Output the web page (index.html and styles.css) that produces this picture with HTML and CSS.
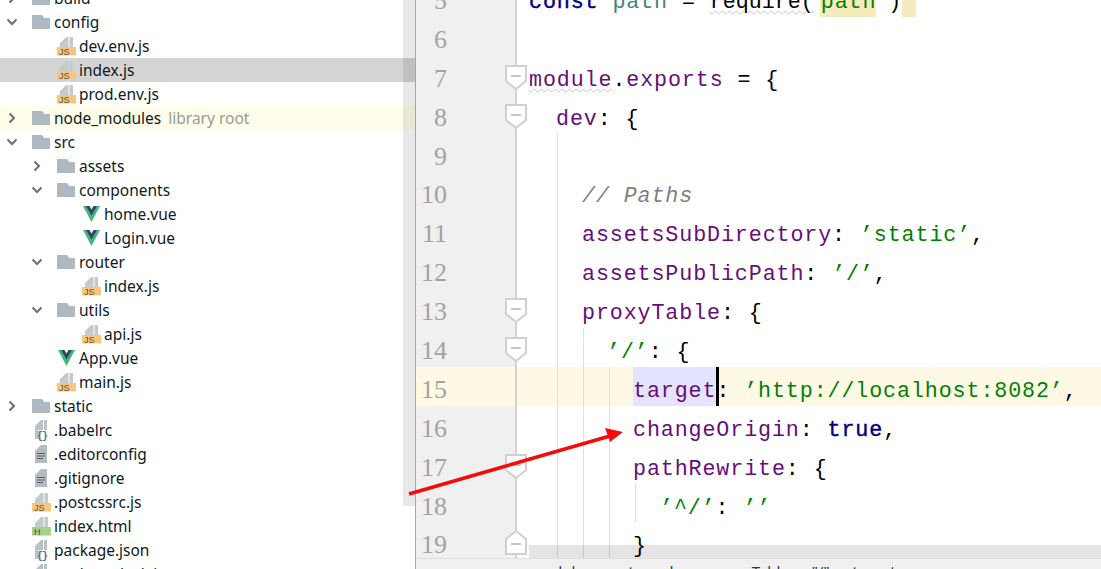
FILE: index.html
```html
<!DOCTYPE html>
<html lang="en">
<head>
<meta charset="utf-8">
<title>config/index.js</title>
<link rel="stylesheet" href="styles.css">
</head>
<body>
<svg class="defs" aria-hidden="true">
  <symbol id="folder" viewBox="0 0 19 24"><path d="M0 5h10l2.500 3H18v11H0z" fill="#afb9c1"/></symbol>
  <symbol id="js" viewBox="0 0 19 24"><path d="M3 13V9l6-6h2.500v10zM12.500 3H16v10h-3.500z" fill="#c4cace"/><rect y="13" width="19" height="8.500" fill="#f5c77e"/><text x="2" y="20.700" class="tag">JS</text></symbol>
  <symbol id="html" viewBox="0 0 19 24"><path d="M3 13V9l6-6h2.500v10zM12.500 3H16v10h-3.500z" fill="#c4cace"/><rect y="13" width="19" height="8.500" fill="#a6d189"/><text x="2" y="20.700" class="tag">H</text></symbol>
  <symbol id="json" viewBox="0 0 19 24"><path d="M3 13V8l6-6h2v10zM12 2h3v10h-3zM3 13h5v8H3z" fill="#b9c1c6"/><text x="5" y="20.500" class="brace">{}</text></symbol>
  <symbol id="text" viewBox="0 0 19 24"><path d="M3 9l6-6h6v18H3z" fill="#b4bcc2"/><path d="M5 11.500h8M5 14h8M5 16.500h6" stroke="#56606a" stroke-width="1.200"/></symbol>
  <symbol id="vue" viewBox="0 0 19 24"><path d="M1 4h4.500l4 7 4-7H18L9.500 20z" fill="#41b883"/><path d="M4 4h3.500l2 3.500 2-3.500H15l-5.500 9.500z" fill="#35495e"/></symbol>
  <symbol id="open" viewBox="0 0 12 24"><path d="M1.500 9.500l4.500 4.500 4.500-4.500" fill="none" stroke="#6e6e6e" stroke-width="2"/></symbol>
  <symbol id="closed" viewBox="0 0 12 24"><path d="M3.500 7.500l4.500 4.500-4.500 4.500" fill="none" stroke="#6e6e6e" stroke-width="2"/></symbol>
  <symbol id="fold-down" viewBox="0 0 22 26"><path d="M1 1h20v15l-10 8-10-8z" fill="#fff" stroke="#d0d0d0" stroke-width="2"/><path d="M6 11h10" stroke="#c8c8c8" stroke-width="2"/></symbol>
  <symbol id="fold-up" viewBox="0 0 22 26"><path d="M1 25h20V10L11 2 1 10z" fill="#fff" stroke="#d0d0d0" stroke-width="2"/><path d="M6 15h10" stroke="#c8c8c8" stroke-width="2"/></symbol>
</svg>

<div class="app">
  <aside class="tree">
    <div class="tree-inner">
      <div class="node d0"><svg class="arrow"><use href="#closed"/></svg><svg class="icon"><use href="#folder"/></svg><span>build</span></div>
      <div class="node d0"><svg class="arrow"><use href="#open"/></svg><svg class="icon"><use href="#folder"/></svg><span>config</span></div>
      <div class="node d1"><i class="arrow"></i><svg class="icon"><use href="#js"/></svg><span>dev.env.js</span></div>
      <div class="node d1 selected"><i class="arrow"></i><svg class="icon"><use href="#js"/></svg><span>index.js</span></div>
      <div class="node d1"><i class="arrow"></i><svg class="icon"><use href="#js"/></svg><span>prod.env.js</span></div>
      <div class="node d0 library"><svg class="arrow"><use href="#closed"/></svg><svg class="icon"><use href="#folder"/></svg><span>node_modules</span><em>library root</em></div>
      <div class="node d0"><svg class="arrow"><use href="#open"/></svg><svg class="icon"><use href="#folder"/></svg><span>src</span></div>
      <div class="node d1"><svg class="arrow"><use href="#closed"/></svg><svg class="icon"><use href="#folder"/></svg><span>assets</span></div>
      <div class="node d1"><svg class="arrow"><use href="#open"/></svg><svg class="icon"><use href="#folder"/></svg><span>components</span></div>
      <div class="node d2"><i class="arrow"></i><svg class="icon"><use href="#vue"/></svg><span>home.vue</span></div>
      <div class="node d2"><i class="arrow"></i><svg class="icon"><use href="#vue"/></svg><span>Login.vue</span></div>
      <div class="node d1"><svg class="arrow"><use href="#open"/></svg><svg class="icon"><use href="#folder"/></svg><span>router</span></div>
      <div class="node d2"><i class="arrow"></i><svg class="icon"><use href="#js"/></svg><span>index.js</span></div>
      <div class="node d1"><svg class="arrow"><use href="#open"/></svg><svg class="icon"><use href="#folder"/></svg><span>utils</span></div>
      <div class="node d2"><i class="arrow"></i><svg class="icon"><use href="#js"/></svg><span>api.js</span></div>
      <div class="node d1"><i class="arrow"></i><svg class="icon"><use href="#vue"/></svg><span>App.vue</span></div>
      <div class="node d1"><i class="arrow"></i><svg class="icon"><use href="#js"/></svg><span>main.js</span></div>
      <div class="node d0"><svg class="arrow"><use href="#closed"/></svg><svg class="icon"><use href="#folder"/></svg><span>static</span></div>
      <div class="node d0"><i class="arrow"></i><svg class="icon"><use href="#json"/></svg><span>.babelrc</span></div>
      <div class="node d0"><i class="arrow"></i><svg class="icon"><use href="#text"/></svg><span>.editorconfig</span></div>
      <div class="node d0"><i class="arrow"></i><svg class="icon"><use href="#text"/></svg><span>.gitignore</span></div>
      <div class="node d0"><i class="arrow"></i><svg class="icon"><use href="#js"/></svg><span>.postcssrc.js</span></div>
      <div class="node d0"><i class="arrow"></i><svg class="icon"><use href="#html"/></svg><span>index.html</span></div>
      <div class="node d0"><i class="arrow"></i><svg class="icon"><use href="#json"/></svg><span>package.json</span></div>
      <div class="node d0"><i class="arrow"></i><svg class="icon"><use href="#json"/></svg><span>package-lock.json</span></div>
    </div>
    <div class="tree-scroll"></div>
  </aside>

  <main class="main">
    <div class="editor">
      <div class="lines">
        <div class="line"><div class="num">5</div><code class="code"><b class="kw">const</b> <span class="var">path</span> = <span class="call">require(</span><span class="hl"><span class="q">’</span><span class="str">path</span></span><span class="q2">’</span> )<span class="hl"> </span></code></div>
        <div class="line"><div class="num">6</div><code class="code"></code></div>
        <div class="line"><div class="num">7<svg class="fold fold-d"><use href="#fold-down"/></svg></div><code class="code"><span class="prop wavy">module</span>.<span class="prop">exports</span> = {</code></div>
        <div class="line"><div class="num">8<svg class="fold fold-d"><use href="#fold-down"/></svg></div><code class="code i1"><span class="prop">dev</span>: {</code></div>
        <div class="line"><div class="num">9</div><code class="code"></code></div>
        <div class="line"><div class="num">10</div><code class="code i2"><span class="comment">// Paths</span></code></div>
        <div class="line"><div class="num">11</div><code class="code i2"><span class="prop">assetsSubDirectory</span>: <span class="str">’static’</span>,</code></div>
        <div class="line"><div class="num">12</div><code class="code i2"><span class="prop">assetsPublicPath</span>: <span class="str">’/’</span>,</code></div>
        <div class="line"><div class="num">13<svg class="fold fold-d"><use href="#fold-down"/></svg></div><code class="code i2"><span class="prop">proxyTable</span>: {</code></div>
        <div class="line"><div class="num">14<svg class="fold fold-d"><use href="#fold-down"/></svg></div><code class="code i3"><span class="str">’/’</span>: {</code></div>
        <div class="line current"><div class="num">15</div><code class="code i4"><span class="prop usage">target</span><span class="caret"></span>: <span class="str">’http://localhost:8082’</span>,</code></div>
        <div class="line"><div class="num">16</div><code class="code i4"><span class="prop">changeOrigin</span>: <b class="kw">true</b>,</code></div>
        <div class="line"><div class="num">17<svg class="fold fold-d"><use href="#fold-down"/></svg></div><code class="code i4"><span class="prop">pathRewrite</span>: {</code></div>
        <div class="line"><div class="num">18</div><code class="code i5"><span class="str">’^/’</span>: <span class="str">’’</span></code></div>
        <div class="line"><div class="num">19<svg class="fold fold-u"><use href="#fold-up"/></svg></div><code class="code i4">}</code></div>
      </div>
      <i class="guide g1"></i><i class="guide g2"></i><i class="guide g3"></i><i class="guide g4"></i>
      <div class="hscroll"></div>
    </div>
    <nav class="crumbs"><span>module.exports</span><span>dev</span><span>proxyTable</span><span>"/"</span><span>target</span></nav>
  </main>

  <svg class="annotation" viewBox="0 0 1101 569" aria-hidden="true">
    <path d="M409 494L610 436" stroke="#f40c0c" stroke-width="3.500" fill="none"/>
    <path d="M623 432L605 428L610 442z" fill="#f40c0c"/>
  </svg>
</div>
</body>
</html>
```

FILE: styles.css
```css
* { box-sizing: border-box; }
html, body { margin: 0; padding: 0; background: #fff; }
.defs { position: absolute; width: 0; height: 0; }

.app {
  position: relative;
  display: flex;
  width: 1101px;
  height: 569px;
  overflow: hidden;
}

/* project tree */
.tree {
  position: relative;
  flex: 0 0 415px;
  overflow: hidden;
  font-family: "Noto Sans", "Open Sans", sans-serif;
  font-size: 15.5px;
  color: #0f1a24;
}
.tree-inner { margin-top: -14px; }
.node {
  display: flex;
  align-items: center;
  height: 24px;
  white-space: nowrap;
}
.node.d0 { padding-left: 3px; }
.node.d1 { padding-left: 28px; }
.node.d2 { padding-left: 53px; }
.node.selected { background: #d4d4d4; }
.node.library { background: #fffde9; }
.node em { margin-left: 7px; font-style: normal; color: #9a9a9a; }
.arrow { flex: 0 0 18px; width: 18px; height: 24px; display: block; }
.icon { flex: 0 0 19px; width: 19px; height: 24px; margin: 0 3px 0 11px; }
.tag { font: 9px "Liberation Sans", sans-serif; fill: #5b5038; }
.brace { font: bold 10px "Liberation Mono", monospace; fill: #55707f; letter-spacing: -1px; }
.tree-scroll {
  position: absolute;
  top: 0;
  left: 403px;
  width: 12px;
  height: 506px;
  background: rgba(0, 0, 0, 0.09);
}

/* editor */
.main {
  flex: 1;
  display: flex;
  flex-direction: column;
  min-width: 0;
  border-left: 1px solid #a6a6a6;
}
.editor {
  position: relative;
  flex: 1;
  min-height: 0;
  overflow: hidden;
  background: #fff;
  background-image: linear-gradient(#f0f0f0, #f0f0f0);
  background-size: 100px 100%;
  background-repeat: no-repeat;
}
.lines { margin-top: -22px; }
.line {
  display: flex;
  height: 38.9px;
  line-height: 50px;
  font-family: "Liberation Mono", monospace;
  font-size: 21.7px;
  letter-spacing: 0.88px;
  white-space: pre;
}
.line.current { background: #fef9e5; }
.num {
  position: relative;
  flex: 0 0 101px;
  padding-right: 68px;
  text-align: right;
  font-family: "Liberation Serif", serif;
  font-size: 26px;
  line-height: 46px;
  color: #a3a3a3;
  letter-spacing: 0;
  border-right: 2px solid #d2d2d2;
}
.code { padding-left: 12px; font: inherit; color: #000; }
.code.i1 { padding-left: 39px; }
.code.i2 { padding-left: 65px; }
.code.i3 { padding-left: 90px; }
.code.i4 { padding-left: 116px; }
.code.i5 { padding-left: 143px; }

.kw { color: #000080; font-weight: normal; -webkit-text-stroke: 0.4px #000080; }
.var { color: #458383; }
.prop { color: #660e7a; }
.str { color: #008000; }
.comment { color: #808080; font-style: italic; }
.hl { background: #f6ebbc; display: inline-block; height: 39px; }
.q { color: #008000; letter-spacing: -12px; }
.q2 { color: #008000; letter-spacing: -13px; margin-right: -2px; }
.call { margin-right: 6px; letter-spacing: 0; text-decoration: underline wavy #c4c4c4 1px; text-underline-offset: 2px; }
.wavy { text-decoration: underline wavy #c4c4c4 1px; text-underline-offset: 2px; }
.usage { background: #e4e4ff; display: inline-block; height: 39px; }
.caret { display: inline-block; width: 3px; height: 39px; margin-right: -3px; background: #000; vertical-align: top; }

.fold { position: absolute; left: 89px; width: 22px; height: 26px; }
.fold-d { top: 9px; }
.fold-u { top: 7px; }

.guide { position: absolute; bottom: 0; width: 1px; background: #dfdfdf; }
.g1 { left: 141px; top: 133px; }
.g2 { left: 167px; top: 328px; }
.g3 { left: 193px; top: 367px; }
.g4 { left: 219px; top: 483px; bottom: 36px; }

.hscroll {
  position: absolute;
  left: 113px;
  right: 0;
  bottom: 0;
  height: 13px;
  background: rgba(0, 0, 0, 0.1);
}

.crumbs {
  flex: 0 0 11px;
  display: flex;
  gap: 23px;
  padding: 0 0 0 114px;
  overflow: hidden;
  background: #f0f0f0;
  border-top: 1px solid #e0e0e0;
  font: 15px/24px "Noto Sans", sans-serif;
  color: #333;
  white-space: nowrap;
}

.annotation { position: absolute; inset: 0; width: 1101px; height: 569px; pointer-events: none; }
```
